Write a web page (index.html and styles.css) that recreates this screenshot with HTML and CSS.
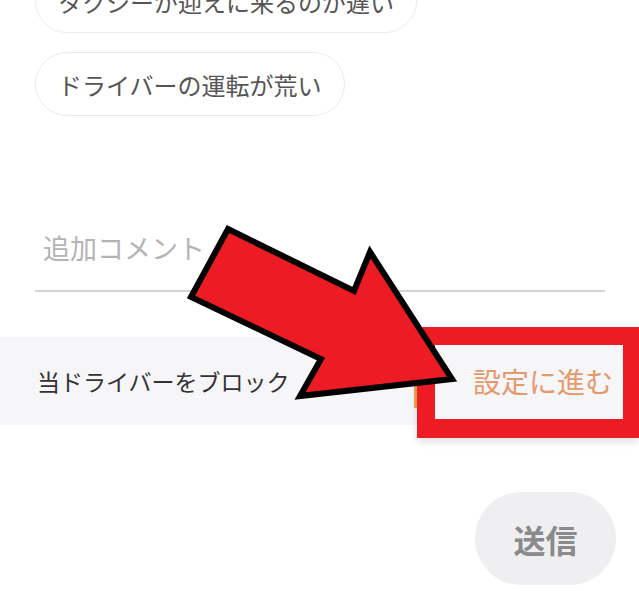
FILE: index.html
```html
<!DOCTYPE html>
<html lang="ja">
<head>
<meta charset="utf-8">
<link rel="stylesheet" href="styles.css">
</head>
<body>
<div class="page">
  <div class="chips">
    <div class="chip">タクシーが迎えに来るのが遅い</div>
    <div class="chip">ドライバーの運転が荒い</div>
  </div>
  <div class="comment">追加コメント</div>
  <div class="band">
    <span class="band-label">当ドライバーをブロック</span>
    <span class="band-link">設定に進む</span>
  </div>
  <div class="actions">
    <div class="send">送信</div>
  </div>
  <div class="sliver"></div>
  <div class="highlight"></div>
  <svg class="arrow" width="639" height="591" viewBox="0 0 639 591">
    <polygon points="228,229 354,291 370,252 452,379 300,396 321,359 191,297" fill="#ed1c24" stroke="#000" stroke-width="6" stroke-linejoin="miter"/>
  </svg>
</div>
</body>
</html>
```
FILE: styles.css
```css
html, body {
  margin: 0;
  padding: 0;
  background: #ffffff;
}
body {
  width: 639px;
  height: 591px;
  overflow: hidden;
  font-family: "Noto Sans CJK JP", "Noto Sans", sans-serif;
}
.page {
  position: relative;
  display: flow-root;
  width: 639px;
  height: 591px;
}
.chips {
  display: flex;
  flex-direction: column;
  align-items: flex-start;
  gap: 19px;
  padding-left: 35px;
  margin-top: -31px;
}
.chip {
  height: 62px;
  border: 1px solid #ebebed;
  border-radius: 32px;
  padding: 0 22px;
  display: flex;
  align-items: center;
  font-size: 24px;
  color: #555555;
  background: #fff;
}
.comment {
  margin: 112px 34px 0 35px;
  padding: 0 0 22px 8px;
  height: 40px;
  line-height: 40px;
  font-size: 27px;
  color: #b4b4b6;
  border-bottom: 2px solid #d4d4d6;
}
.band {
  margin-top: 45px;
  height: 88px;
  background: #f6f5f7;
  display: flex;
  align-items: center;
  justify-content: space-between;
  padding: 0 26px 0 37px;
}
.band-label {
  font-size: 23px;
  color: #333333;
}
.band-link {
  font-size: 28px;
  color: #e49a6c;
}
.actions {
  display: flex;
  justify-content: flex-end;
  padding-right: 23px;
  margin-top: 67px;
}
.send {
  width: 141px;
  height: 93px;
  border-radius: 47px;
  background: #efeef0;
  display: flex;
  align-items: center;
  justify-content: center;
  font-size: 32px;
  font-weight: bold;
  color: #8a8a8c;
}
.sliver {
  position: absolute;
  left: 414px;
  top: 386px;
  width: 4px;
  height: 22px;
  background: #f0a050;
}
.highlight {
  position: absolute;
  left: 417px;
  top: 327px;
  width: 188px;
  height: 74px;
  border-style: solid;
  border-color: #ed1c24;
  border-width: 18px 16px 19px 18px;
  box-shadow: 0 4px 8px rgba(0, 0, 0, 0.12);
}
.arrow {
  position: absolute;
  left: 0;
  top: 0;
}
```
